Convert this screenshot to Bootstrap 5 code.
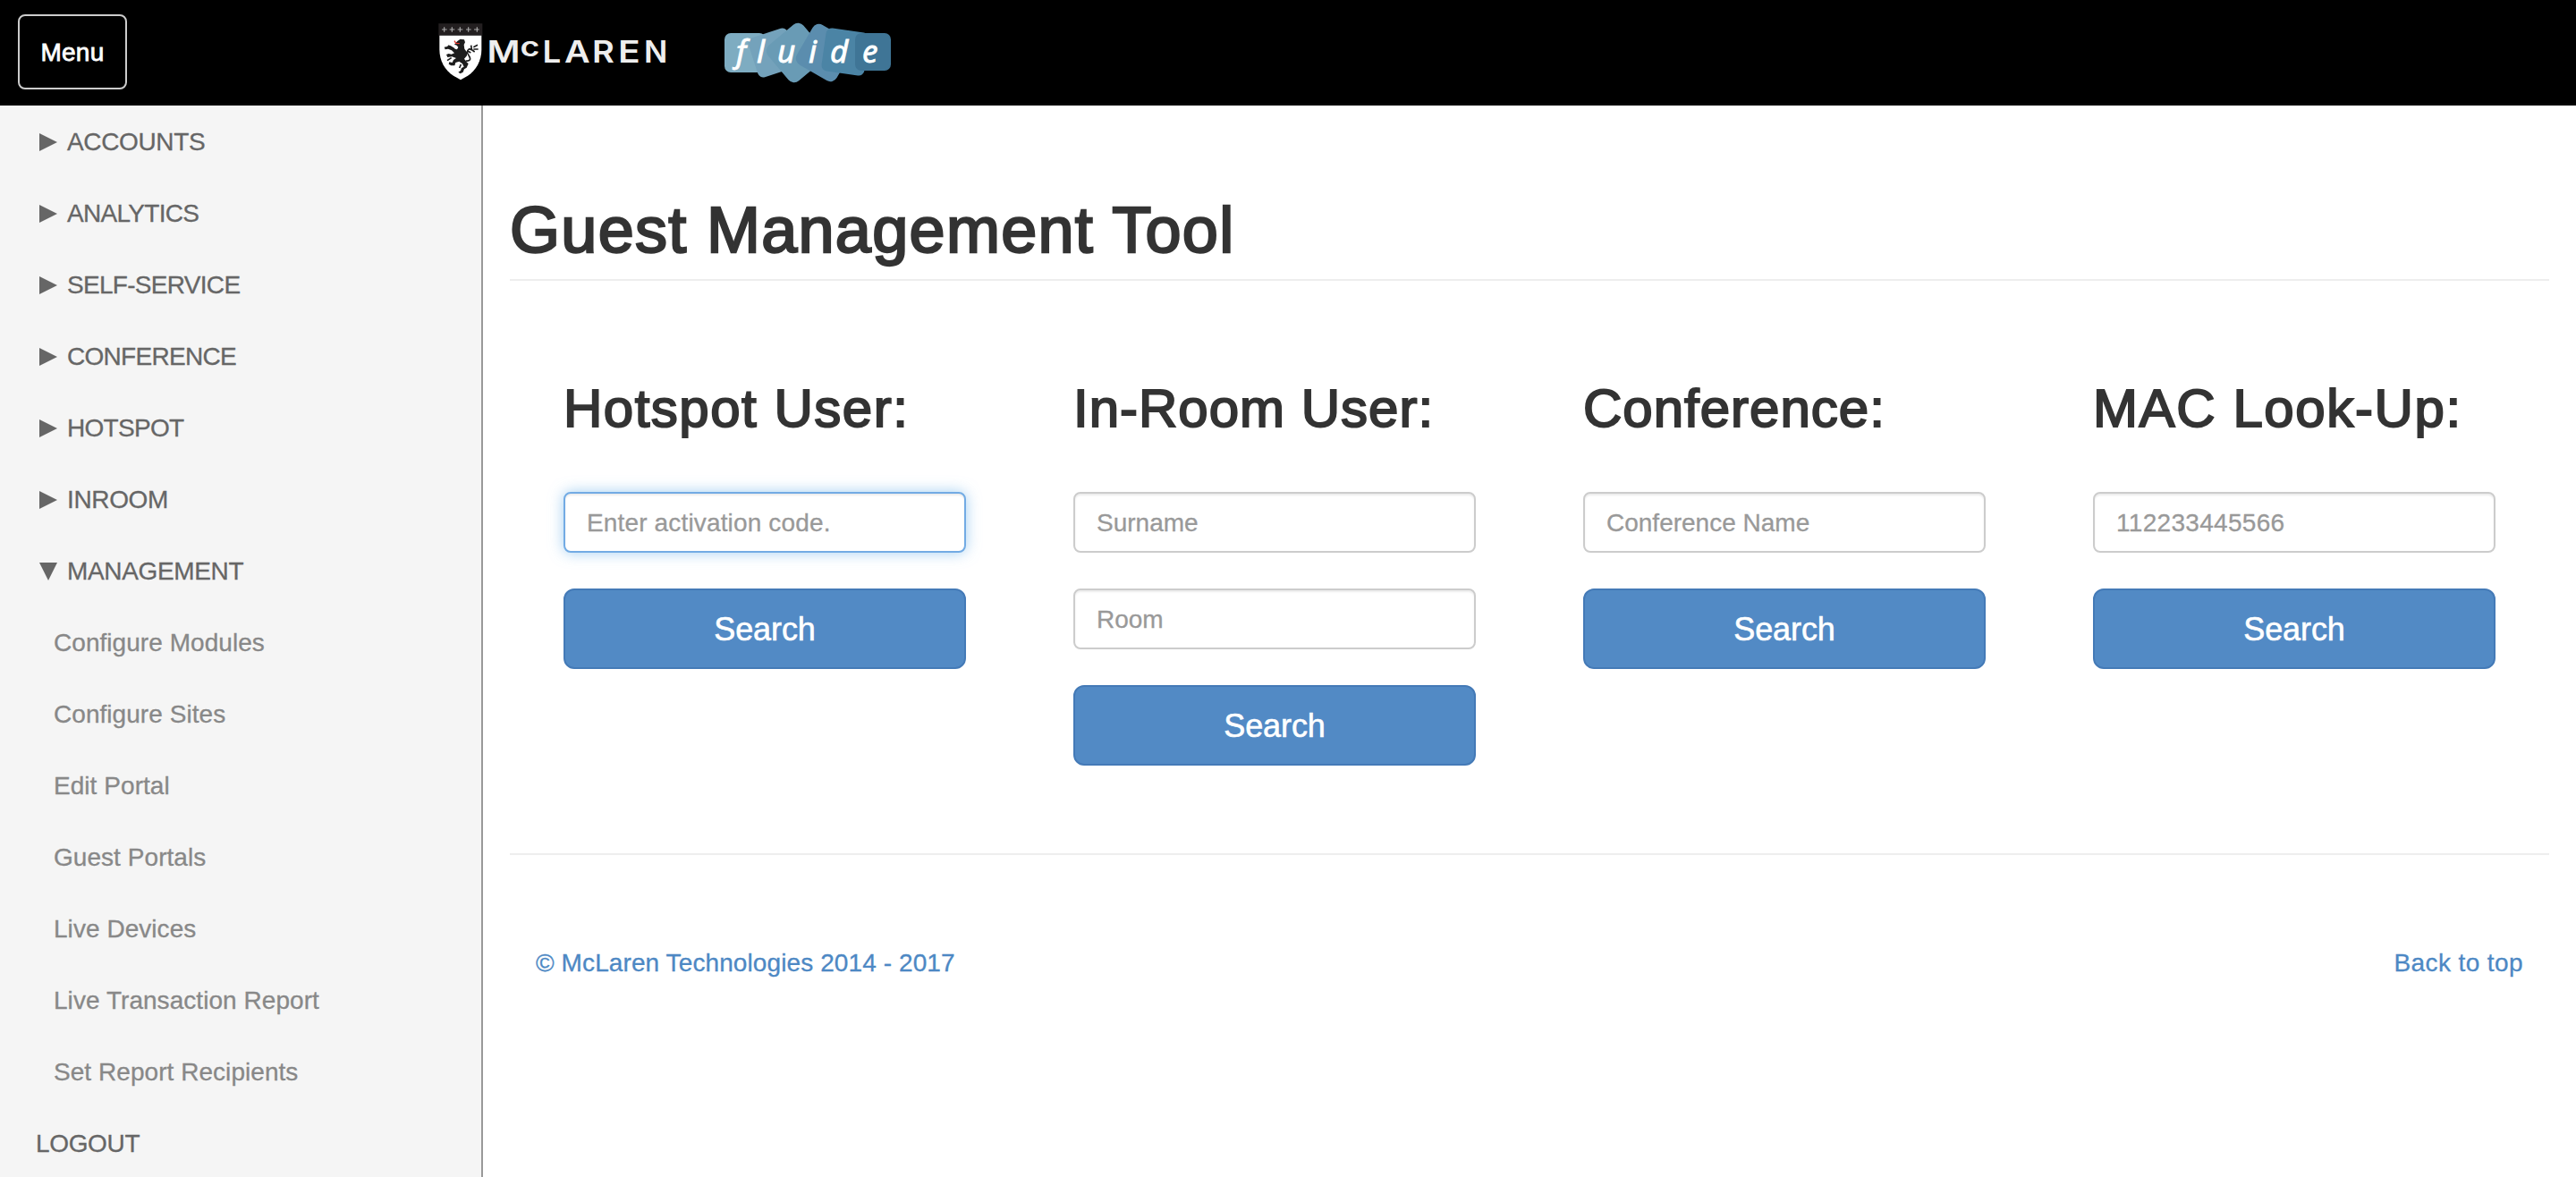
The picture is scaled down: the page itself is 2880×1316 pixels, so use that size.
<!DOCTYPE html>
<html lang="en">
<head>
<meta charset="utf-8">
<meta name="viewport" content="width=device-width, initial-scale=1">
<title>Guest Management Tool</title>
<link href="https://cdn.jsdelivr.net/npm/bootstrap@5.3.0/dist/css/bootstrap.min.css" rel="stylesheet">
<style>
  body { font-family: "Liberation Sans", Arial, sans-serif; font-size: 28px; line-height: 40px; color: #333; background: #fff; height: 100vh; overflow: hidden; }
  .topbar { height: 118px; padding: 0 20px; border-bottom: 2px solid #080808; }
  .btn-menu { width: 122px; height: 84px; padding: 2px 0 0; border: 2px solid #ccc; border-radius: 8px; color: #fff; font-size: 28px; letter-spacing: .2px; -webkit-text-stroke: .8px #fff; }
  .logo-mclaren { margin-left: 344px; }
  .logo-fluide { margin: 2px 0 0 56px; }
  .sidebar { width: 540px; background: #f5f5f5; border-right: 2px solid #999; }
  .sidebar .nav-link { height: 80px; padding: 1px 0 0 44px; color: #666; letter-spacing: -.35px; line-height: 80px; -webkit-text-stroke: .3px; }
  .sidebar .nav-link svg { width: 20px; margin-right: 11px; fill: #666; }
  .sidebar .nav-link.tight { letter-spacing: -.7px; }
  .sidebar .nav-link.sub { padding-left: 60px; color: #888; letter-spacing: .05px; }
  .sidebar .nav-link.plain { padding-left: 40px; }
  .page { padding: 99px 30px 0; }
  h1 { font-size: 72px; line-height: 80px; font-weight: 400; letter-spacing: 1.3px; padding-bottom: 15px; border-bottom: 2px solid #eee; margin: 0; -webkit-text-stroke: 2.4px #333; }
  h2 { font-size: 60px; line-height: 66px; font-weight: 400; letter-spacing: 1.5px; margin: 0 0 60px; -webkit-text-stroke: 2px #333; white-space: nowrap; }
  h2.narrow { letter-spacing: 1px; }
  h2.wide { letter-spacing: 1.6px; }
  .panels { padding-top: 110px; height: 640px; }
  .panel { padding: 0 60px; }
  .form-control { height: 68px; padding: 1px 24px 0; font-size: 28px; line-height: 40px; border: 2px solid #ccc; border-radius: 8px; box-shadow: inset 0 2px 2px rgba(0,0,0,.075); margin-bottom: 40px; letter-spacing: 0; }
  .form-control::placeholder { color: #999; opacity: 1; -webkit-text-stroke: .3px; }
  .form-control.active-field { border-color: #72abe4; letter-spacing: .15px; box-shadow: inset 0 2px 2px rgba(0,0,0,.075), 0 0 16px rgba(102,175,233,.6); }
  .form-control.digits { letter-spacing: .3px; }
  .btn-search { height: 90px; padding: 2px 0 0; font-size: 36px; color: #fff; background: #528ac5; border: 2px solid #447ab7; border-radius: 12px; letter-spacing: -.1px; -webkit-text-stroke: .6px #fff; }
  .site-footer { border-top: 2px solid #eee; padding: 101px 29px 0; letter-spacing: .1px; -webkit-text-stroke: .3px; }
  .site-footer a { color: #4d88c4; text-decoration: none; }
  .site-footer a + a { letter-spacing: .4px; }
</style>
</head>
<body class="d-flex flex-column">
<header class="topbar bg-black d-flex align-items-center flex-shrink-0">
  <button class="btn btn-menu" type="button">Menu</button>
  <svg class="logo-mclaren" width="268" height="72" viewBox="0 0 268 72" role="img" aria-label="McLaren">
    <g transform="scale(.33333)">
      <path fill="#231f20" d="M13 13h147v40H13z"/>
      <path fill="none" stroke="#aaa" stroke-width="3.5" d="M24 33h17M32 25v16M50 33h17M58 25v16M77 33h17M85 25v16M105 33h17M113 25v16M132 33h17M142 25v16"/>
      <path fill="#fff" d="M16 53h141v48c0 35-18 69-46 87l-24 14-24-14C34 170 16 136 16 101z"/>
      <path fill="#1d1d1d" d="M76 72l10-7 13 2 3 9-4 8 2 14 8 11 0 12-9 10 7 10 7 7-6 13-8 5-4 10-9 5-7-5 8-5 3-9 8-4-5-10-11-8-12 4-3 10-12 0-8-5 2-7 10 2 4-9 9-6-14-5-15 2-4-9 8-3 9 2 10-4-9-9-12-5-10 2-3-8 10-2 5-5 9 5 9 7 10 3 4-8-5-6-8-3z"/>
      <path fill="none" stroke="#1d1d1d" stroke-width="5" d="M104 138c14 2 18-5 12-15s-12-17 0-25l10 4 8 6M124 100l-2-14M130 92l14-7M130 99h16M121 111l-9-5M66 98l-15-9M56 128l-14 9M88 150l-5 12"/>
      <path fill="none" stroke="#e2382e" stroke-width="4" d="M66 71l5 8 12 1"/>
    </g>
    <g fill="#eee" font-family="Inter, sans-serif" font-weight="600">
      <text transform="translate(58.5 48.3) scale(1.18 1)" font-size="34">M</text>
      <text transform="translate(95.5 41) scale(1.25 1)" font-size="30">c</text>
      <text transform="translate(120.5 48.3) scale(1.08 1)" font-size="34">L</text>
      <text transform="translate(145 48.3) scale(1.16 1)" font-size="34">A</text>
      <text transform="translate(176 48.3) scale(1.12 1)" font-size="34">R</text>
      <text transform="translate(205 48.3) scale(1.2 1)" font-size="34">E</text>
      <text transform="translate(234 48.3) scale(1.02 1)" font-size="34">N</text>
    </g>
  </svg>
  <svg class="logo-fluide" width="186" height="68" viewBox="0 0 186 68" role="img" aria-label="fluide">
    <rect x="0" y="12" width="46" height="44" rx="7" fill="#7eacc1"/>
    <rect x="-22" y="-22" width="44" height="44" rx="6" fill="#74a2bb" transform="translate(54 34) rotate(-18)scale(1.05)"/>
    <rect x="-22" y="-22" width="44" height="44" rx="7" fill="#699bb5" transform="translate(80 34) rotate(-40)scale(1.18)"/>
    <rect x="-22" y="-22" width="44" height="44" rx="7" fill="#5b8dae" transform="translate(112 34) rotate(30)scale(1.17)"/>
    <rect x="-22" y="-22" width="44" height="44" rx="6" fill="#4b84a5" transform="translate(135 33) rotate(8)scale(1.1)"/>
    <rect x="146" y="12" width="40" height="42" rx="7" fill="#3f7596"/>
    <g fill="#fff" stroke="#fff" stroke-width=".8" font-family="'Noto Sans', sans-serif" font-style="italic" font-size="35">
      <text y="45"><tspan x="13">f</tspan><tspan x="36">l</tspan><tspan x="59">u</tspan><tspan x="94">i</tspan><tspan x="118">d</tspan><tspan x="154">e</tspan></text>
    </g>
  </svg>
</header>

<div class="d-flex flex-grow-1">
  <nav class="sidebar nav flex-column flex-nowrap flex-shrink-0">
    <a class="nav-link d-flex align-items-center" href="#"><svg height="20" viewBox="0 0 20 20"><path d="M0 0l20 10L0 20z"/></svg>ACCOUNTS</a>
    <a class="nav-link tight d-flex align-items-center" href="#"><svg height="20" viewBox="0 0 20 20"><path d="M0 0l20 10L0 20z"/></svg>ANALYTICS</a>
    <a class="nav-link tight d-flex align-items-center" href="#"><svg height="20" viewBox="0 0 20 20"><path d="M0 0l20 10L0 20z"/></svg>SELF-SERVICE</a>
    <a class="nav-link tight d-flex align-items-center" href="#"><svg height="20" viewBox="0 0 20 20"><path d="M0 0l20 10L0 20z"/></svg>CONFERENCE</a>
    <a class="nav-link tight d-flex align-items-center" href="#"><svg height="20" viewBox="0 0 20 20"><path d="M0 0l20 10L0 20z"/></svg>HOTSPOT</a>
    <a class="nav-link d-flex align-items-center" href="#"><svg height="20" viewBox="0 0 20 20"><path d="M0 0l20 10L0 20z"/></svg>INROOM</a>
    <a class="nav-link d-flex align-items-center" href="#"><svg height="20" viewBox="0 0 20 20"><path d="M0 0h20L10 20z"/></svg>MANAGEMENT</a>
    <a class="nav-link sub" href="#">Configure Modules</a>
    <a class="nav-link sub" href="#">Configure Sites</a>
    <a class="nav-link sub" href="#">Edit Portal</a>
    <a class="nav-link sub" href="#">Guest Portals</a>
    <a class="nav-link sub" href="#">Live Devices</a>
    <a class="nav-link sub" href="#">Live Transaction Report</a>
    <a class="nav-link sub" href="#">Set Report Recipients</a>
    <a class="nav-link plain" href="#">LOGOUT</a>
  </nav>

  <main class="page flex-grow-1">
    <h1>Guest Management Tool</h1>
    <div class="row g-0 panels">
      <form class="col-3 panel">
        <h2>Hotspot User:</h2>
        <input class="form-control active-field" type="text" placeholder="Enter activation code.">
        <button class="btn btn-search w-100" type="button">Search</button>
      </form>
      <form class="col-3 panel">
        <h2 class="narrow">In-Room User:</h2>
        <input class="form-control" type="text" placeholder="Surname">
        <input class="form-control" type="text" placeholder="Room">
        <button class="btn btn-search w-100" type="button">Search</button>
      </form>
      <form class="col-3 panel">
        <h2 class="narrow">Conference:</h2>
        <input class="form-control" type="text" placeholder="Conference Name">
        <button class="btn btn-search w-100" type="button">Search</button>
      </form>
      <form class="col-3 panel">
        <h2 class="wide">MAC Look-Up:</h2>
        <input class="form-control digits" type="text" placeholder="112233445566">
        <button class="btn btn-search w-100" type="button">Search</button>
      </form>
    </div>
    <footer class="site-footer d-flex justify-content-between">
      <a href="#">© McLaren Technologies 2014 - 2017</a>
      <a href="#">Back to top</a>
    </footer>
  </main>
</div>
<script src="https://cdn.jsdelivr.net/npm/bootstrap@5.3.0/dist/js/bootstrap.bundle.min.js"></script>
</body>
</html>
